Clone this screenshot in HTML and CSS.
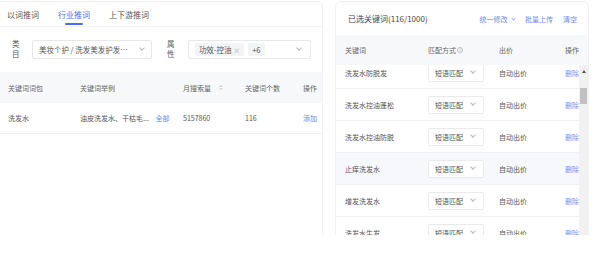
FILE: index.html
```html
<!DOCTYPE html>
<html lang="zh-CN">
<head>
    <meta charset="UTF-8">
    <meta name="viewport" content="width=device-width, initial-scale=1.0">
    <title>关键词推荐</title>
    <link rel="stylesheet" href="styles.css">
</head>
<body>
    <div class="page">
        <!-- 左侧：推词 -->
        <div class="panel left">
            <div class="tabs">
                <div class="tab">以词推词</div>
                <div class="tab active">行业推词</div>
                <div class="tab">上下游推词</div>
            </div>

            <div class="filters">
                <div class="label">类<br>目</div>
                <div class="select cat">
                    <span class="select-text">美妆个护 / 洗发美发护发护理</span>
                    <span class="chev"></span>
                </div>
                <div class="label attr-label">属<br>性</div>
                <div class="select attr">
                    <span class="tag">功效-控油 <span class="x">×</span></span>
                    <span class="tag">+6</span>
                    <span class="chev push"></span>
                </div>
            </div>

            <div class="grid head">
                <div>关键词词包</div>
                <div>关键词举例</div>
                <div class="sort-cell">月搜索量
                    <span class="sorter"><i class="up"></i><i class="down"></i></span>
                </div>
                <div>关键词个数</div>
                <div>操作</div>
            </div>
            <div class="grid row">
                <div>洗发水</div>
                <div>油皮洗发水、干枯毛... <a class="link all">全部</a></div>
                <div>5157860</div>
                <div>116</div>
                <div><a class="link">添加</a></div>
            </div>
        </div>

        <!-- 右侧：已选关键词 -->
        <div class="panel right">
            <div class="sel-head">
                <div class="sel-title">已选关键词(116/1000)</div>
                <div class="actions">
                    <a class="link">统一修改 <span class="mini-chev"></span></a>
                    <a class="link">批量上传</a>
                    <a class="link">清空</a>
                </div>
            </div>

            <div class="kgrid khead">
                <div>关键词</div>
                <div class="help-cell">匹配方式 <span class="help">?</span></div>
                <div>出价</div>
                <div>操作</div>
            </div>

            <div class="kbody">
                <div class="krows">
                    <div class="kgrid krow"><div>洗发水防脱发</div><div><span class="match">短语匹配<span class="chev"></span></span></div><div>自动出价</div><div><a class="link">删除</a></div></div>
                    <div class="kgrid krow"><div>洗发水控油蓬松</div><div><span class="match">短语匹配<span class="chev"></span></span></div><div>自动出价</div><div><a class="link">删除</a></div></div>
                    <div class="kgrid krow"><div>洗发水控油防脱</div><div><span class="match">短语匹配<span class="chev"></span></span></div><div>自动出价</div><div><a class="link">删除</a></div></div>
                    <div class="kgrid krow hover"><div>止痒洗发水</div><div><span class="match">短语匹配<span class="chev"></span></span></div><div>自动出价</div><div><a class="link">删除</a></div></div>
                    <div class="kgrid krow"><div>增发洗发水</div><div><span class="match">短语匹配<span class="chev"></span></span></div><div>自动出价</div><div><a class="link">删除</a></div></div>
                    <div class="kgrid krow"><div>洗发水生发</div><div><span class="match">短语匹配<span class="chev"></span></span></div><div>自动出价</div><div><a class="link">删除</a></div></div>
                </div>
                <div class="scrollbar">
                    <div class="arrow"></div>
                    <div class="thumb"></div>
                </div>
            </div>
        </div>
    </div>
</body>
</html>
```

FILE: styles.css
```css
* {
    margin: 0;
    padding: 0;
    box-sizing: border-box;
}

body {
    background: #fff;
    font-family: "Noto Sans CJK SC", "Noto Sans", sans-serif;
    color: #444;
}

.page {
    display: flex;
    gap: 12px;
    height: 235px;
    padding-top: 1px;
    overflow: hidden;
}

.panel {
    border: 1px solid #f0f1f4;
    background: #fff;
    height: 260px;
}

.left {
    width: 324px;
    margin-left: -1px;
    border-radius: 0 6px 0 0;
}

.right {
    width: 254px;
    border-radius: 6px 6px 0 0;
}

.link {
    color: #6a87f6;
    cursor: pointer;
}

/* tabs */
.tabs {
    display: flex;
    gap: 19px;
    height: 25px;
    padding: 0 7px;
    border-bottom: 1px solid #f2f3f5;
    align-items: center;
    font-size: 8px;
}

.tab {
    color: #555;
    position: relative;
    height: 100%;
    display: flex;
    align-items: center;
}

.tab.active {
    color: #4d6cf6;
}

.tab.active::after {
    content: '';
    position: absolute;
    left: 7px;
    right: 7px;
    bottom: 1px;
    height: 2px;
    border-radius: 1px;
    background: #4d6cf6;
}

/* filters */
.filters {
    display: flex;
    align-items: center;
    padding: 12px 11px 13px 12px;
    font-size: 7.5px;
}

.label {
    width: 8px;
    line-height: 10px;
    color: #555;
    margin-right: 12px;
}

.attr-label {
    margin-left: 15px;
    margin-right: 13px;
}

.select {
    display: flex;
    align-items: center;
    height: 19px;
    border: 1px solid #e6e8ec;
    border-radius: 2px;
    padding: 0 7px 0 6px;
}

.cat {
    width: 120px;
}

.attr {
    width: 124px;
    gap: 4px;
}

.select-text {
    flex: 1;
    white-space: nowrap;
    overflow: hidden;
    text-overflow: ellipsis;
    color: #555;
    padding-right: 6px;
}

.tag {
    background: #f3f4f6;
    height: 13px;
    line-height: 13px;
    padding: 0 4px;
    border-radius: 2px;
    color: #555;
    white-space: nowrap;
}

.tag:last-of-type {
    padding: 0 6px;
}

.x {
    color: #aaa;
    font-size: 7px;
}

.chev {
    display: inline-block;
    width: 4px;
    height: 4px;
    border-right: 1px solid #b5b8bf;
    border-bottom: 1px solid #b5b8bf;
    transform: rotate(45deg);
    margin-top: -3px;
    flex: none;
}

.push {
    margin-left: auto;
    margin-right: 2px;
}

/* left table */
.grid {
    display: grid;
    grid-template-columns: 72px 103px 62px 58px 1fr;
    padding-left: 8px;
    align-items: center;
    font-size: 7px;
    white-space: nowrap;
}

.head {
    height: 31px;
    background: #f7f8fa;
    color: #666;
}

.row {
    height: 31px;
    border-bottom: 1px solid #f0f1f3;
    color: #555;
}

.all {
    margin-left: 5px;
}

.sort-cell {
    display: flex;
    align-items: center;
}

.sorter {
    display: inline-flex;
    flex-direction: column;
    gap: 1px;
    margin-left: 8px;
}

.sorter i {
    width: 0;
    height: 0;
    border-left: 2px solid transparent;
    border-right: 2px solid transparent;
}

.sorter .up {
    border-bottom: 2px solid #d0d3d9;
}

.sorter .down {
    border-top: 2px solid #d0d3d9;
}

/* right panel */
.sel-head {
    display: flex;
    align-items: center;
    justify-content: space-between;
    height: 33px;
    padding: 0 11px 0 12px;
}

.sel-title {
    font-size: 8px;
    color: #444;
}

.actions {
    display: flex;
    gap: 10px;
    font-size: 7px;
}

.mini-chev {
    display: inline-block;
    width: 3px;
    height: 3px;
    border-right: 1px solid #9db0f8;
    border-bottom: 1px solid #9db0f8;
    transform: rotate(45deg);
    margin: 0 0 2px 3px;
}

.kgrid {
    display: grid;
    grid-template-columns: 83px 71px 66px 1fr;
    padding-left: 9px;
    align-items: center;
    font-size: 7px;
    white-space: nowrap;
}

.khead {
    height: 30px;
    background: #f7f8fa;
    color: #666;
}

.help-cell {
    display: flex;
    align-items: center;
}

.help {
    display: inline-flex;
    align-items: center;
    justify-content: center;
    width: 6px;
    height: 6px;
    border: 0.7px solid #c0c0c0;
    border-radius: 50%;
    font-size: 4.5px;
    color: #b0b0b0;
    margin-left: 1px;
}

.kbody {
    display: flex;
    height: 200px;
}

.krows {
    flex: 1;
    overflow: hidden;
}

.krows .krow:first-child {
    margin-top: -8px;
}

.krow {
    height: 32px;
    border-bottom: 1px solid #f0f1f3;
    color: #555;
}

.krow.hover {
    background: #f6f8fc;
}

.match {
    display: flex;
    align-items: center;
    justify-content: space-between;
    width: 56px;
    height: 18px;
    padding: 0 8px 0 6px;
    border: 1px solid #e8eaee;
    border-radius: 2px;
    background: #fff;
    color: #555;
}

.krow .link {
    color: #7393f7;
}

.scrollbar {
    width: 9px;
    background: #f1f1f1;
    display: flex;
    flex-direction: column;
    align-items: center;
}

.arrow {
    margin-top: 5px;
    width: 0;
    height: 0;
    border-left: 2px solid transparent;
    border-right: 2px solid transparent;
    border-bottom: 3px solid #505050;
}

.thumb {
    margin-top: 15px;
    width: 7px;
    height: 16px;
    background: #c1c1c1;
}
```
